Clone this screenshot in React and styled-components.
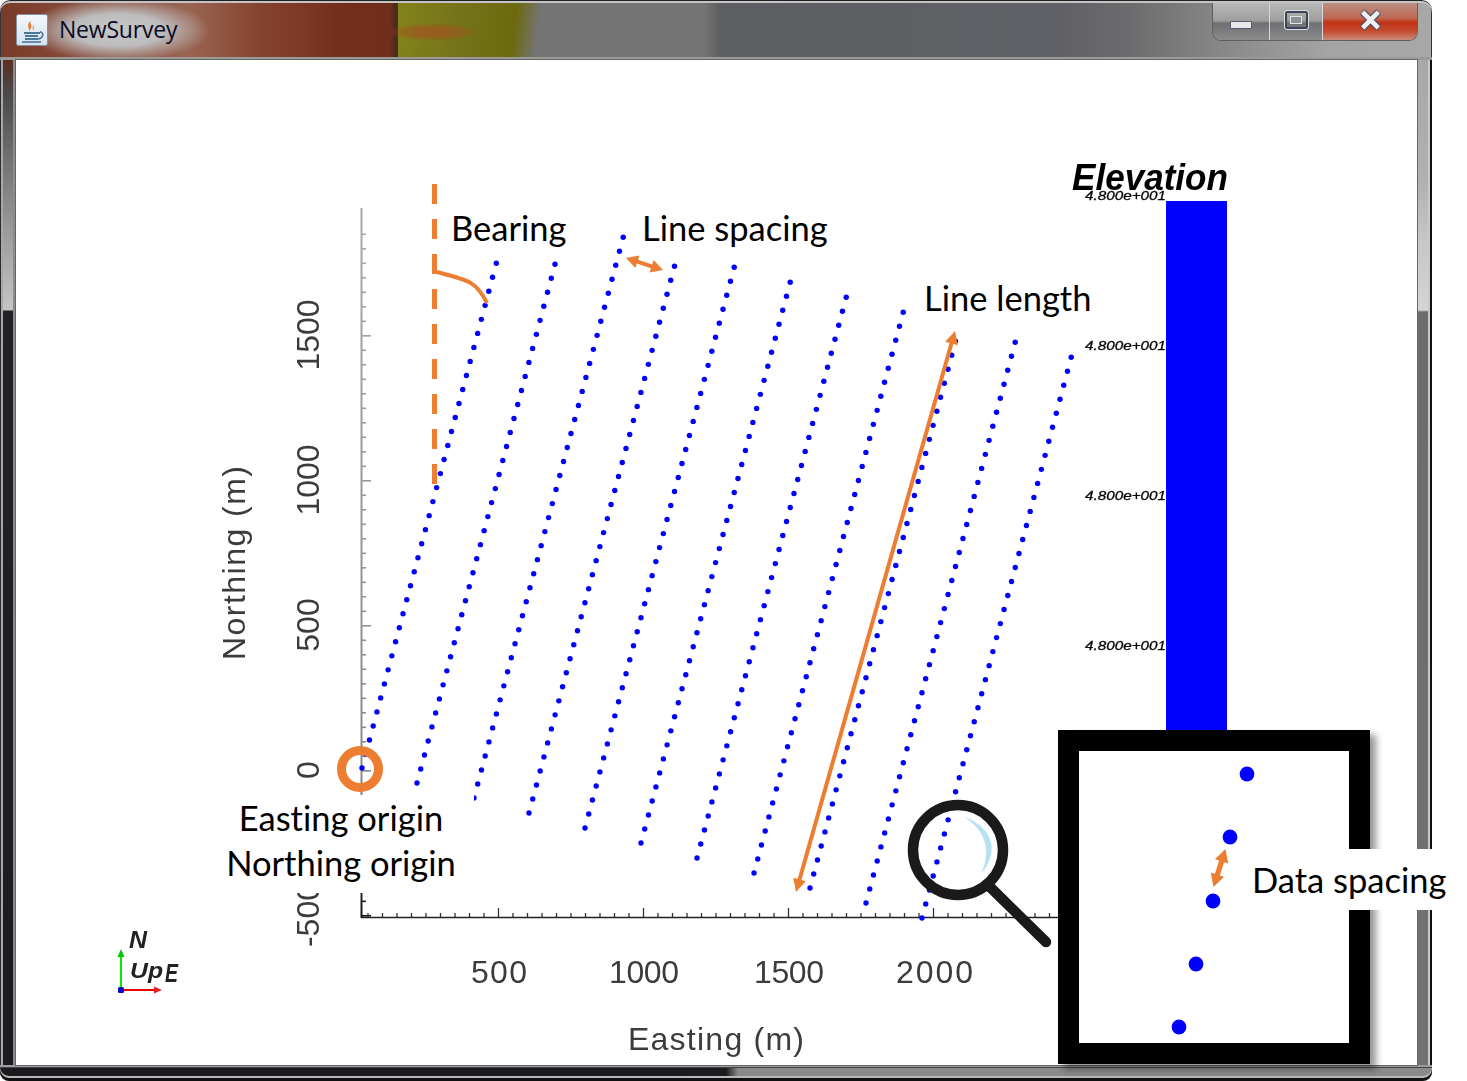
import React from "react"
import styled, { createGlobalStyle } from "styled-components"

const GlobalStyle = createGlobalStyle`
  html, body {
    margin: 0;
    padding: 0;
    background: #fff;
  }
`

const Window = styled.div`
  display: grid;
  grid-template-columns: 16px 1401px 15px;
  grid-template-rows: 60px 1005px 16px;
  width: 1432px;
  height: 1081px;
`

const TitleBar = styled.header`
  grid-column: 1 / 4;
  display: flex;
  align-items: flex-start;
  justify-content: space-between;
  padding: 14px 14px 0 16px;
  box-sizing: border-box;
  border-radius: 10px 10px 0 0;
  box-shadow: inset 0 1px 0 #222, inset 0 3px 0 #c4c4c4, inset 0 -3px 0 #9a9a96,
    inset 1px 0 0 #333, inset -1px 0 0 #333;
  background:
    radial-gradient(ellipse 92px 32px at 118px 30px, #c6c6c6 0, #bdbdbd 50%, rgba(190, 190, 190, 0) 100%),
    radial-gradient(ellipse 46px 9px at 432px 32px, rgba(170, 70, 30, 0.6) 0, rgba(170, 70, 30, 0.45) 60%, rgba(170, 70, 30, 0) 100%),
    linear-gradient(97deg, #83831c 0, #76741a 40%, #6c6a0e 78%, rgba(108, 106, 14, 0) 94%) 398px 0 / 146px 100% no-repeat,
    linear-gradient(90deg, #7a3a28 0, #9a6452 190px, #84432f 260px, #742f1c 340px, #702e1b 390px, #3f2c1a 397px,
      #747474 402px, #747474 704px, #5d5e62 720px, #606166 1060px, #6c6c6e 1130px, #8a8a8a 1230px, #a4a4a4 1330px, #a8a8a8 1432px);
`

const TitleGroup = styled.div`
  display: flex;
  align-items: center;
  gap: 11px;
`

const TitleText = styled.span`
  margin-top: -3px;
  font-family: "Open Sans", sans-serif;
  font-size: 23px;
  line-height: 32px;
  letter-spacing: -0.2px;
  color: #0b0b26;
`

const ButtonGroup = styled.div`
  display: flex;
  margin-top: -11px;
  height: 37px;
  border: 1px solid #5c6068;
  border-top: none;
  border-radius: 0 0 9px 9px;
  overflow: hidden;
`

const CaptionButton = styled.div`
  display: flex;
  align-items: center;
  justify-content: center;
  width: ${p => p.$width}px;
  border-left: ${p => (p.$first ? "none" : "1px solid #d8d8d8")};
  background: ${p =>
    p.$danger
      ? "linear-gradient(180deg, #b98f84 0, #bf6a55 40%, #c23416 52%, #c4492d 75%, #c98a78 100%)"
      : "linear-gradient(180deg, #b8b8b8 0, #9e9e9e 48%, #6f7072 54%, #8b8b8c 100%)"};
`

const MinimizeGlyph = styled.div`
  width: 22px;
  height: 8px;
  box-sizing: border-box;
  margin-top: 7px;
  background: #e8e8ec;
  border: 1px solid #565b70;
  border-radius: 1px;
`

const MaximizeGlyph = styled.div`
  display: flex;
  align-items: center;
  justify-content: center;
  width: 19px;
  height: 14px;
  margin-top: -3px;
  border: 2px solid #3e4458;
  outline: 1px solid #dedede;
  border-radius: 2px;
`

const MaximizeInner = styled.div`
  width: 10px;
  height: 6px;
  background: #8c8e96;
  border: 1px solid #e4e4e4;
`

const CloseIcon = styled.svg`
  width: 23px;
  height: 22px;
  margin-top: -3px;
`

const SideRail = styled.div`
  background: ${p =>
    p.$side === "left"
      ? "linear-gradient(180deg, #5c2e22 0, #4a4a4c 35px, #6c6c6c 90px, #9a9a9a 170px, #c4c4c4 248px, #c4c4c4 250px, #222226 251px, #1c1c20 100%)"
      : "linear-gradient(180deg, #a8a8a8 0, #b0b0b0 120px, #c6c6c6 180px, #d4d4d4 248px, #d4d4d4 250px, #6c6c6c 252px, #727272 100%)"};
  box-shadow: ${p =>
    p.$side === "left"
      ? "inset 1px 0 0 #2c2c2c, inset 3px 0 0 #a8a8a8, inset -1px 0 0 #3a3a3a, inset -3px 0 0 #8c8c8c"
      : "inset 1px 0 0 #a0a0a0, inset -2px 0 0 #111, inset -4px 0 0 #c8c8c8"};
`

const BottomRail = styled.div`
  grid-column: 1 / 4;
  border-radius: 0 0 9px 9px;
  box-shadow: inset 0 2px 0 #9c9c9c, inset 0 3px 0 #444, inset 0 -3px 0 #111, inset 0 -5px 0 #b8b8b8;
  background: linear-gradient(90deg, #1b1b1f 0, #1c1c20 726px, #8a8a8a 738px, #8a8a8a 100%);
`

const Panel = styled.main`
  position: relative;
  background: #fff;
  box-shadow: 0 0 0 1px #666;
`

const Chart = styled.svg`
  display: block;
  width: 1401px;
  height: 1005px;
  filter: blur(0.6px);
`

const Overlay = styled.svg`
  position: absolute;
  top: 0;
  left: 0;
  width: 1401px;
  height: 1005px;
  pointer-events: none;
`

const TickLabel = styled.text`
  font-family: "Liberation Sans", Arial, sans-serif;
  font-size: 32px;
  fill: #3c3c3c;
`

const ColorTitle = styled.text`
  font-family: "Liberation Sans", Arial, sans-serif;
  font-size: 36px;
  font-weight: 700;
  font-style: italic;
  fill: #000;
`

const ColorTick = styled.text`
  font-family: "Liberation Sans", Arial, sans-serif;
  font-size: 12px;
  font-style: italic;
  fill: #000;
  stroke: #111;
  stroke-width: 0.3px;
`

const TriadLabel = styled.text`
  font-family: "Liberation Sans", Arial, sans-serif;
  font-size: ${p => p.$size}px;
  font-weight: 700;
  font-style: italic;
  fill: #222;
`

const Note = styled.div`
  position: absolute;
  left: ${p => p.$x - 16}px;
  top: ${p => p.$y - 60}px;
  font-family: Lato, "Open Sans", sans-serif;
  font-size: 34.5px;
  font-variant-ligatures: none;
  line-height: 40px;
  color: #000;
  white-space: nowrap;
`

const OriginNote = styled(Note)`
  width: 252px;
  height: 98px;
  padding-right: 14px;
  box-sizing: border-box;
  background: #fff;
  line-height: 45px;
  text-align: center;
`

const Inset = styled.aside`
  position: absolute;
  left: 1042px;
  top: 670px;
  width: 270px;
  height: 292px;
  border: 21px solid #000;
  background: #fff;
  box-shadow: 6px 5px 7px rgba(0, 0, 0, 0.42);
`

const InsetDrawing = styled.svg`
  display: block;
  width: 270px;
  height: 292px;
`

const SpacingNote = styled(Note)`
  width: 201px;
  height: 61px;
  padding: 11px 0 0 6px;
  box-sizing: border-box;
  background: #fff;
`

const ORANGE = "#ed7d31"
const BLUE = "#0000ff"
const STEP_X = 3.73
const STEP_Y = 14.02

// survey lines: bottom point and how many intervals up to the top point
const SURVEY_LINES = [
  [362, 768, 36],
  [417, 783, 37],
  [474, 798, 40],
  [529, 813, 39],
  [585, 828, 40],
  [641, 843, 40],
  [697, 858, 40],
  [754, 873, 40],
  [810, 888, 39],
  [866, 903, 40],
  [922, 918, 40],
]

const surveyDots = SURVEY_LINES.flatMap(([x, y, n]) =>
  Array.from({ length: n + 1 }, (_, i) => [x + STEP_X * i, y - STEP_Y * i])
)

const range = (from, to, step) => {
  const out = []
  for (let v = from; v <= to; v += step) out.push(v)
  return out
}

const yTicks = range(233.5, 918, 14.5)
const xTicks = range(368, 1058, 14.5)

// two headed arrow as a polygon
function arrowPoints(x1, y1, x2, y2, shaft, headLen, headWidth) {
  const len = Math.hypot(x2 - x1, y2 - y1)
  const ux = (x2 - x1) / len
  const uy = (y2 - y1) / len
  const nx = -uy
  const ny = ux
  const at = (along, side) => [x1 + ux * along + nx * side, y1 + uy * along + ny * side].join(",")
  return [
    at(0, 0),
    at(headLen, headWidth),
    at(headLen, shaft),
    at(len - headLen, shaft),
    at(len - headLen, headWidth),
    at(len, 0),
    at(len - headLen, -headWidth),
    at(len - headLen, -shaft),
    at(headLen, -shaft),
    at(headLen, -headWidth),
  ].join(" ")
}

function JavaIcon() {
  return (
    <svg width="32" height="32" viewBox="0 0 32 32">
      <defs>
        <linearGradient id="javaBg" x1="0" y1="0" x2="0" y2="1">
          <stop offset="0" stopColor="#f4f8fc" />
          <stop offset="1" stopColor="#d4e2ee" />
        </linearGradient>
      </defs>
      <rect x="0.5" y="0.5" width="31" height="31" rx="2" fill="url(#javaBg)" stroke="#7e93a8" />
      <path d="M16 5 C11 9 19 11 13 17 C14 13 9 12 16 5 Z" fill="#ea7a2a" />
      <path d="M20 9 C16 11 20 13 17 17 C17 14 15 13 20 9 Z" fill="#f0a060" />
      <path d="M8 19 H24 M9 22 H22 M9 25 H22" stroke="#4a7795" strokeWidth="1.8" />
      <path d="M24 18 C28 18 28 24 22 25" stroke="#4a7795" strokeWidth="1.6" fill="none" />
      <path d="M6 28 H25" stroke="#4a7795" strokeWidth="1.6" />
    </svg>
  )
}

function CloseGlyph() {
  return (
    <CloseIcon viewBox="0 0 24 24">
      <path d="M3 3 L21 21 M21 3 L3 21" stroke="#4e5368" strokeWidth="7.5" />
      <path d="M3.5 3.5 L20.5 20.5 M20.5 3.5 L3.5 20.5" stroke="#f1f1f3" strokeWidth="5" />
    </CloseIcon>
  )
}

function SurveyChart() {
  return (
    <Chart viewBox="16 60 1401 1005">
      <defs>
        <linearGradient id="axisFade" gradientUnits="userSpaceOnUse" x1="0" y1="208" x2="0" y2="918">
          <stop offset="0" stopColor="#a8a8a8" />
          <stop offset="0.8" stopColor="#8a8a8a" />
          <stop offset="0.95" stopColor="#333" />
          <stop offset="1" stopColor="#111" />
        </linearGradient>
      </defs>

      <rect x="360.5" y="208" width="2" height="710" fill="url(#axisFade)" />
      {yTicks.map(y => {
        const major = Math.abs((y - 335 + 1450) % 145) < 0.1
        return <rect key={y} x="361" y={y} width={major ? 10 : 5} height="1.6" fill="url(#axisFade)" />
      })}

      <line x1="361" y1="917.5" x2="1058" y2="917.5" stroke="#222" strokeWidth="1.6" />
      {xTicks.map(x => {
        const major = Math.abs((x - 498.5 + 1450) % 145) < 0.1
        return <line key={x} x1={x} y1={major ? 908 : 913} x2={x} y2="917" stroke="#333" strokeWidth="1.3" />
      })}

      {surveyDots.map(([x, y]) => (
        <circle key={`${x}-${y}`} cx={x} cy={y} r="2.7" fill={BLUE} />
      ))}

      {[
        ["1500", 335],
        ["1000", 480],
        ["500", 625],
        ["0", 770],
        ["-500", 915],
      ].map(([label, y]) => (
        <TickLabel key={label} x="319" y={y} textAnchor="middle" transform={`rotate(-90 319 ${y})`}>
          {label}
        </TickLabel>
      ))}
      {[
        ["500", 499, 56],
        ["1000", 644, 70],
        ["1500", 789, 70],
        ["2000", 934.5, 77],
      ].map(([label, x, width]) => (
        <TickLabel key={label} x={x} y="983" textAnchor="middle" textLength={width} lengthAdjust="spacing">
          {label}
        </TickLabel>
      ))}
      <TickLabel x="628" y="1050" textLength="176" lengthAdjust="spacing">
        Easting (m)
      </TickLabel>
      <TickLabel x="245" y="660" textLength="194" lengthAdjust="spacing" transform="rotate(-90 245 660)">
        Northing (m)
      </TickLabel>

      <ColorTitle x="1072" y="190" textLength="156" lengthAdjust="spacingAndGlyphs">
        Elevation
      </ColorTitle>
      {[200, 350, 500, 650].map(y => (
        <ColorTick key={y} x="1085" y={y} textLength="81" lengthAdjust="spacingAndGlyphs">
          4.800e+001
        </ColorTick>
      ))}
      <rect x="1166" y="201" width="61" height="540" fill={BLUE} />

      <path d="M121 990 V956" stroke="#00ee00" strokeWidth="2" />
      <path d="M121 949 L117.5 957 H124.5 Z" fill="#00c800" />
      <path d="M121 990 H155" stroke="#ee0000" strokeWidth="2" />
      <path d="M162 990 L154 986.5 V993.5 Z" fill="#e02020" />
      <rect x="118" y="987" width="6" height="6" rx="1.5" fill="#0000d0" />
      <TriadLabel $size={24} x="129" y="948" textLength="18" lengthAdjust="spacingAndGlyphs">
        N
      </TriadLabel>
      <TriadLabel $size={22} x="130" y="978" textLength="33" lengthAdjust="spacingAndGlyphs">
        Up
      </TriadLabel>
      <TriadLabel $size={25} x="165" y="982" textLength="13" lengthAdjust="spacingAndGlyphs">
        E
      </TriadLabel>
    </Chart>
  )
}

function Annotations() {
  return (
    <Overlay viewBox="16 60 1401 1005">
      <line x1="434.5" y1="184" x2="434.5" y2="484" stroke={ORANGE} strokeWidth="5" strokeDasharray="20 15" />
      <path d="M437 272 C468 280 476 281 487 303" fill="none" stroke={ORANGE} strokeWidth="4" />
      <polygon points={arrowPoints(626, 258, 663, 270, 2, 12, 6.5)} fill={ORANGE} />
      <polygon points={arrowPoints(955, 331, 796, 892, 2, 13, 6.5)} fill={ORANGE} />
      <circle cx="360" cy="769" r="18.5" fill="none" stroke={ORANGE} strokeWidth="9" />

      <path d="M964 817 C990 825 1002 850 981 874 C992 850 985 830 964 817 Z" fill="#b8e2f2" />
      <circle cx="958" cy="850" r="45" fill="none" stroke="#1a1a1a" strokeWidth="10.5" />
      <line x1="989" y1="886" x2="1046" y2="942" stroke="#1a1a1a" strokeWidth="10.5" strokeLinecap="round" />
    </Overlay>
  )
}

export default function App() {
  return (
    <>
      <GlobalStyle />
      <Window>
        <TitleBar>
          <TitleGroup>
            <JavaIcon />
            <TitleText>NewSurvey</TitleText>
          </TitleGroup>
          <ButtonGroup>
            <CaptionButton $width={56} $first>
              <MinimizeGlyph />
            </CaptionButton>
            <CaptionButton $width={52}>
              <MaximizeGlyph>
                <MaximizeInner />
              </MaximizeGlyph>
            </CaptionButton>
            <CaptionButton $width={94} $danger>
              <CloseGlyph />
            </CaptionButton>
          </ButtonGroup>
        </TitleBar>

        <SideRail $side="left" />
        <Panel>
          <SurveyChart />
          <Note $x={451} $y={208}>Bearing</Note>
          <Note $x={642} $y={208}>Line spacing</Note>
          <Note $x={924} $y={278}>Line length</Note>
          <OriginNote $x={222} $y={795}>
            Easting origin
            <br />
            Northing origin
          </OriginNote>
          <Annotations />
          <Inset>
            <InsetDrawing viewBox="1079 751 270 292">
              {[
                [1247, 774],
                [1230, 837],
                [1213, 901],
                [1196, 964],
                [1179, 1027],
              ].map(([x, y]) => (
                <circle key={y} cx={x} cy={y} r="7.4" fill={BLUE} />
              ))}
              <polygon points={arrowPoints(1225.5, 849, 1213.5, 887, 2.6, 13, 7)} fill={ORANGE} />
            </InsetDrawing>
          </Inset>
          <SpacingNote $x={1246} $y={849}>Data spacing</SpacingNote>
        </Panel>
        <SideRail $side="right" />

        <BottomRail />
      </Window>
    </>
  )
}
